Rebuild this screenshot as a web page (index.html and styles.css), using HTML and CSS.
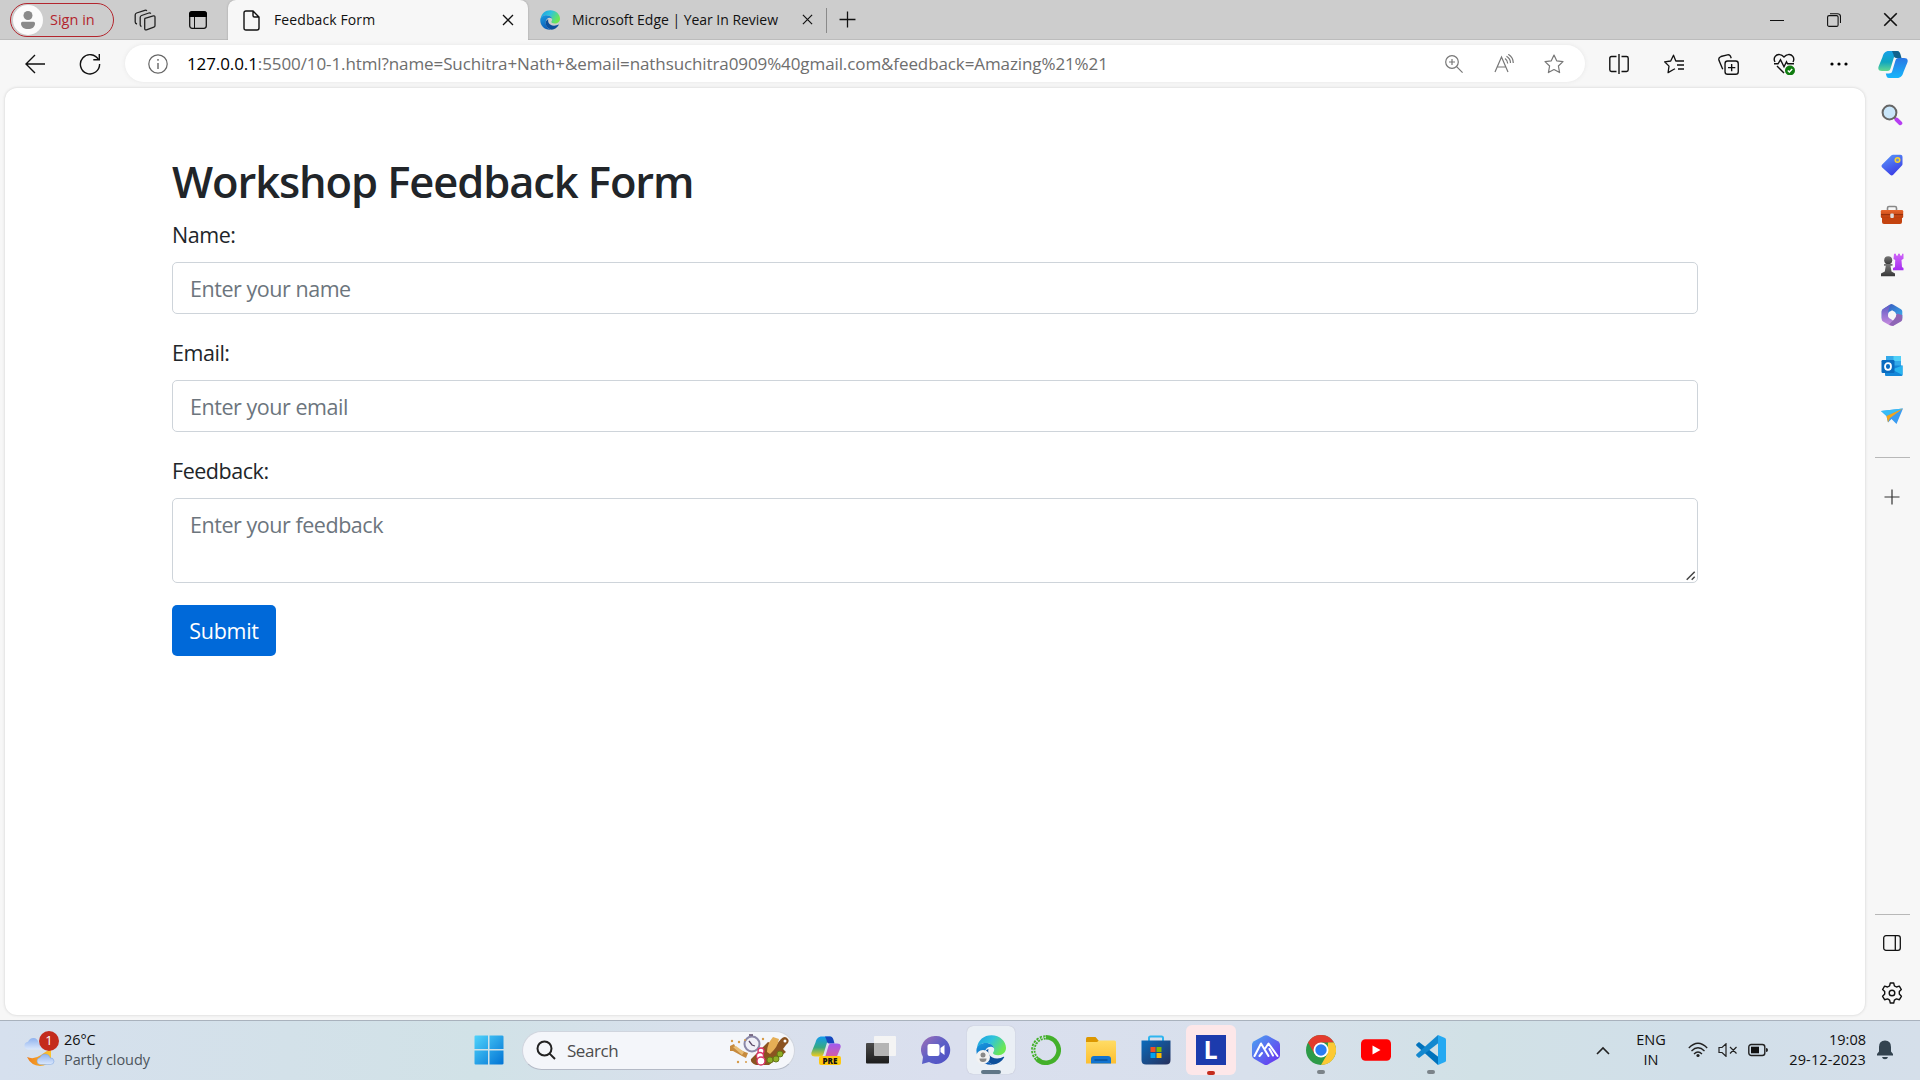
FILE: index.html
```html
<!DOCTYPE html>
<html lang="en">
<head>
<meta charset="utf-8">
<title>Feedback Form</title>
<link rel="stylesheet" href="styles.css">
</head>
<body>
<svg class="defs" width="0" height="0" aria-hidden="true">
  <defs>
    <linearGradient id="eg1" x1="0" y1="0" x2="1" y2="0.5"><stop offset="0" stop-color="#1b9de2"/><stop offset=".5" stop-color="#2fc3dc"/><stop offset="1" stop-color="#6ce852"/></linearGradient>
    <linearGradient id="eg2" x1="0" y1="0" x2="0.4" y2="1"><stop offset="0" stop-color="#1a9be0"/><stop offset="1" stop-color="#0b5cb8"/></linearGradient>
    <linearGradient id="win" x1="0" y1="0" x2="1" y2="1"><stop offset="0" stop-color="#4fd3fb"/><stop offset="1" stop-color="#0273d4"/></linearGradient>
    <linearGradient id="cp1" x1="0" y1="0" x2="0" y2="1"><stop offset="0" stop-color="#17a0e8"/><stop offset=".55" stop-color="#10a6c0"/><stop offset="1" stop-color="#64d890"/></linearGradient>
    <linearGradient id="cp2" x1="0" y1="0" x2="0" y2="1"><stop offset="0" stop-color="#2a77e4"/><stop offset="1" stop-color="#17b6fb"/></linearGradient>
    <linearGradient id="cq1" x1="0" y1="0" x2="0" y2="1"><stop offset="0" stop-color="#129bef"/><stop offset=".55" stop-color="#36a982"/><stop offset="1" stop-color="#f4cb1c"/></linearGradient>
    <linearGradient id="cq2" x1="0" y1="0" x2="0" y2="1"><stop offset="0" stop-color="#a05af0"/><stop offset="1" stop-color="#f0607c"/></linearGradient>
    <linearGradient id="tag" x1="0" y1="0" x2="0.5" y2="1"><stop offset="0" stop-color="#5b9cfb"/><stop offset="1" stop-color="#3c3fe6"/></linearGradient>
    <linearGradient id="box" x1="0" y1="0" x2="0" y2="1"><stop offset="0" stop-color="#e8662c"/><stop offset="1" stop-color="#bd3d0c"/></linearGradient>
    <linearGradient id="rook" x1="0" y1="0" x2="0" y2="1"><stop offset="0" stop-color="#cf65f8"/><stop offset="1" stop-color="#a52eef"/></linearGradient>
    <linearGradient id="pawn" x1="0" y1="0" x2="0" y2="1"><stop offset="0" stop-color="#777"/><stop offset="1" stop-color="#383838"/></linearGradient>
    <linearGradient id="fold" x1="0" y1="0" x2="0" y2="1"><stop offset="0" stop-color="#ffdc65"/><stop offset="1" stop-color="#fdbf30"/></linearGradient>
    <linearGradient id="store" x1="0" y1="0" x2="1" y2="1"><stop offset="0" stop-color="#0a6cbd"/><stop offset="1" stop-color="#27305c"/></linearGradient>
    <linearGradient id="hex" x1="0" y1="0" x2="1" y2="1"><stop offset="0" stop-color="#4aa5f0"/><stop offset="1" stop-color="#6b2cf0"/></linearGradient>
    <linearGradient id="chat" x1="0" y1="0" x2="1" y2="1"><stop offset="0" stop-color="#a36fb5"/><stop offset=".5" stop-color="#5b5fc7"/><stop offset="1" stop-color="#4e4fc4"/></linearGradient>
    <linearGradient id="moon" x1="0" y1="0" x2="1" y2="0"><stop offset="0" stop-color="#ee7d1c"/><stop offset="1" stop-color="#fbc530"/></linearGradient>
    <linearGradient id="cloud" x1="0" y1="0" x2="0" y2="1"><stop offset="0" stop-color="#8fb2ee"/><stop offset="1" stop-color="#dbe8fc"/></linearGradient>
    <linearGradient id="m1" x1="0" y1="0" x2="1" y2="1"><stop offset="0" stop-color="#3a4cb8"/><stop offset="1" stop-color="#38b3ef"/></linearGradient>
    <linearGradient id="m2" x1="0" y1="0" x2="0" y2="1"><stop offset="0" stop-color="#5a5ac4"/><stop offset="1" stop-color="#cd8ee0"/></linearGradient>
    <linearGradient id="dark" x1="0" y1="0" x2="0" y2="1"><stop offset="0" stop-color="#4b4b4b"/><stop offset="1" stop-color="#1c1c1c"/></linearGradient>
  </defs>
  <symbol id="edge" viewBox="0 0 30 30">
    <path d="M1 13C2 5 8 .3 15.500.3 24 .3 30 6.500 30 13c0 4.500-3.500 7.200-7.800 7.200-3.500 0-5.200-1-5.200-2.200 0-1 1.200-1.400 1.200-3.600C18.200 11 14.500 8 9.800 8 5.500 8 2.500 10 1 13z" fill="url(#eg1)"/>
    <path d="M.4 15.500C.4 10.500 5 8 9.800 8c4.400 0 7.600 2.300 8.300 5.200-1-.9-2.200-1.400-3.600-1.400-3.200 0-6 3-6 7.400 0 4.800 3.500 9 8.600 10.300-1 .2-1.600.2-2.400.2C6.500 29.700.4 23.500.4 15.500z" fill="url(#eg2)"/>
    <path d="M12.500 14c-1.300 4 1.500 9.500 8.600 9.500 2.700 0 5-.9 6.500-1.700.5-.2.800.2.500.7-2.300 4-6 6.600-10.500 7-5.500-1.100-9.200-5.400-9.200-10 0-2.300 1.700-4.700 4.100-5.500z" fill="#0c4f9b"/>
  </symbol>
  <symbol id="x" viewBox="0 0 12 12"><path d="M1 1l10 10M11 1L1 11" fill="none" stroke="currentColor" stroke-width="1.300"/></symbol>
  <symbol id="plus" viewBox="0 0 16 16"><path d="M8 .5v15M.5 8h15" fill="none" stroke="currentColor" stroke-width="1.200"/></symbol>
  <symbol id="copilot" viewBox="0 0 30 27">
    <path d="M19 0h-8C7 0 5.500 2.500 4.500 6L.6 15.500C-.5 19 1.500 20 4 20h5.500c2 0 2.600-1 3.200-3l3-10c.5-1.800 1.500-2.500 3.500-2.500h3C21.500 1.500 21 0 19 0z" fill="var(--a)"/>
    <path d="M14 0h5c3 0 3.500 3 4.500 7h-4c-2.500 0-3.300 0-4-3.500z" fill="var(--c)"/>
    <path d="M11 27h8c4 0 5.500-2.500 6.500-6l3.900-9.500C30.500 8 28.500 7 26 7h-5.500c-2 0-2.600 1-3.200 3l-3 10c-.5 1.800-1.500 2.500-3.500 2.500h-3C8.500 25.500 9 27 11 27z" fill="var(--b)"/>
  </symbol>
</svg>

<header class="tabstrip">
  <div class="signin">
    <svg class="avatar" width="30" height="30" viewBox="0 0 30 30"><circle cx="15" cy="15" r="15" fill="#fbfbfb"/><circle cx="15" cy="10.500" r="4.500" fill="#8a8a8a"/><path d="M8 18.200q0-1.500 1.500-1.500h11q1.500 0 1.500 1.500c0 4-3 5.800-7 5.800s-7-1.800-7-5.800z" fill="#8a8a8a"/></svg>
    <span>Sign in</span>
  </div>
  <div class="cell w60"><svg width="22" height="22" viewBox="0 0 22 22" fill="none" stroke="#222" stroke-width="1.300" stroke-linejoin="round"><path d="M11 9.300l8.300-2.400q1.700-.3 1.700 1.400v8.200q0 1.300-1.200 1.700l-7.300 2.600q-1.800.5-1.800-1.300v-8.700q0-1.200.3-1.500z"/><path d="M7.500 17.500q-1.300-.3-1.300-1.700V8.500q0-1.500 1.400-2L14.800 4q1.400-.4 2 .6"/><path d="M3 15Q1.200 14.500 1.200 13V6q0-1.500 1.400-2L10.800 1.300q1.400-.4 2 .7"/></svg></div>
  <div class="cell w46"><svg width="20" height="20" viewBox="0 0 20 20"><rect x="1.700" y="2" width="16.600" height="16.300" rx="2.500" fill="none" stroke="#111" stroke-width="1.300"/><path d="M1 7V4q0-3 3-3h12q3 0 3 3v3z" fill="#000"/><path d="M6.500 7v11" stroke="#111"/></svg></div>
  <div class="tab active">
    <svg width="17" height="21" viewBox="0 0 17 21" fill="none" stroke="#111" stroke-width="1.400"><path d="M3 1h7l6 6v11q0 2-2 2H3q-2 0-2-2V3q0-2 2-2zM10 1v4.500Q10 7 11.500 7H16"/></svg>
    <span class="t1">Feedback Form</span>
    <svg class="close" width="12" height="12"><use href="#x"/></svg>
  </div>
  <div class="tab">
    <svg width="20" height="20"><use href="#edge"/></svg>
    <span class="t2">Microsoft Edge | Year In Review</span>
    <svg class="close" width="11" height="11"><use href="#x"/></svg>
  </div>
  <div class="newtab"><svg width="17" height="17"><use href="#plus"/></svg></div>
  <div class="winctl">
    <div class="cell w57"><svg width="14" height="14"><path d="M0 7.500h14" stroke="#111"/></svg></div>
    <div class="cell w57"><svg width="14" height="14" viewBox="0 0 14 14" fill="none" stroke="#111" stroke-width="1.100"><rect x=".6" y="2.600" width="10.500" height="10.800" rx="1.500"/><path d="M3 .7h7.500q3 0 3 3V10"/></svg></div>
    <div class="cell w57"><svg width="15" height="15"><use href="#x"/></svg></div>
  </div>
</header>

<nav class="toolbar">
  <div class="cell w55"><svg width="20" height="20" viewBox="0 0 20 20" fill="none" stroke="#111" stroke-width="1.400"><path d="M20 10H1M10 1l-9 9 9 9"/></svg></div>
  <div class="cell w55"><svg width="22" height="22" viewBox="0 0 22 22" fill="none" stroke="#111" stroke-width="1.400"><path d="M19.500 6.800A9.600 9.600 0 1 0 20.600 11M20.300 1v5.800h-6"/></svg></div>
  <div class="address">
    <svg width="20" height="20" viewBox="0 0 20 20" fill="none" stroke="#666" stroke-width="1.200"><circle cx="10" cy="10" r="9.200"/><path d="M10 9v6M10 5v1.800" stroke-width="1.400"/></svg>
    <span class="url"><b>127.0.0.1</b>:5500/10-1.html?name=Suchitra+Nath+&amp;email=nathsuchitra0909%40gmail.com&amp;feedback=Amazing%21%21</span>
    <div class="addr-icons">
      <div class="cell w50"><svg width="18" height="18" viewBox="0 0 18 18" fill="none" stroke="#777" stroke-width="1.200"><circle cx="7" cy="7" r="6.300"/><path d="M11.600 11.600l6 6M7 4v6M4 7h6"/></svg></div>
      <div class="cell w50"><svg width="20" height="19" viewBox="0 0 20 19" fill="none" stroke="#777" stroke-width="1.200"><path d="M1 18L7.500 3 14 18M3.500 13h8M11 4.500q2.700 1.800 2.700 5M12.500 2.200Q16.500 4.500 16.500 9M14.300.3Q19.300 3.500 19.300 9"/></svg></div>
      <div class="cell w50"><svg width="20" height="20" viewBox="0 0 20 20" fill="none" stroke="#777" stroke-width="1.200" stroke-linejoin="round"><path d="M10 1l2.700 5.800 6.300.8-4.600 4.400 1.200 6.600L10 15.500l-5.600 3.100L5.600 12 1 7.600l6.300-.8z"/></svg></div>
    </div>
  </div>
  <div class="tools">
    <div class="cell w55"><svg width="20" height="20" viewBox="0 0 20 20" fill="none" stroke="#111" stroke-width="1.400"><path d="M7.500 2.500h-5Q.8 2.500.8 4.200v11.600q0 1.700 1.700 1.700h5M12.500 2.500h5q1.700 0 1.700 1.700v11.600q0 1.700-1.700 1.700h-5M10 0v20"/></svg></div>
    <div class="cell w55"><svg width="20" height="20" viewBox="0 0 20 20" fill="none" stroke="#111" stroke-width="1.300" stroke-linejoin="round"><path d="M13.500 7h-1.700L9.500 1.200 6.700 7l-6.100.8 4.400 4.300-.9 6.500 5.400-3.100 1.500-.8M13 7h7M13 11h7M14 15h6"/></svg></div>
    <div class="cell w55"><svg width="21" height="21" viewBox="0 0 20 20" fill="none" stroke="#111" stroke-width="1.300"><rect x="6.700" y="6.700" width="12.600" height="12.600" rx="2.500"/><path d="M13 9.500v7M9.500 13h7M4.500 14.500L.9 6Q.2 3.300 2.800 2.400L9 .8q2-.4 2.800 1.200l.8 2"/></svg></div>
    <div class="cell w55"><svg width="22" height="22" viewBox="0 0 22 22" fill="none" stroke="#111" stroke-width="1.400"><path d="M2 9Q.3 6 2.200 3.400 4 1 7 1.600q2 .3 4 2.400 2-2.100 4-2.400 3-.6 4.800 1.800Q21.700 6 20 9M1 10.800h4l2.500-4 3.500 7 2.500-5 1 2h6.500M4 13l7 7"/><circle cx="17" cy="17.500" r="5" fill="#107c10" stroke="none"/><path d="M14.800 17.600l1.600 1.500 2.800-3" stroke="#fff"/></svg></div>
    <div class="cell w55"><svg width="18" height="4"><circle cx="2" cy="2" r="1.600"/><circle cx="9" cy="2" r="1.600"/><circle cx="16" cy="2" r="1.600"/></svg></div>
    <div class="cell w54"><svg class="cp-blue" width="30" height="27"><use href="#copilot"/></svg></div>
  </div>
</nav>

<div class="body">
  <main class="page">
    <form class="container">
      <h2>Workshop Feedback Form</h2>
      <div class="group"><label for="name">Name:</label><input id="name" type="text" placeholder="Enter your name"></div>
      <div class="group"><label for="email">Email:</label><input id="email" type="text" placeholder="Enter your email"></div>
      <div class="group"><label for="fb">Feedback:</label><div class="area"><textarea id="fb" placeholder="Enter your feedback"></textarea><svg class="grip" width="10" height="10" viewBox="0 0 10 10"><path d="M.7 8.700L8.700.7M5.700 8.700l3-3" stroke="#444" stroke-width="1.500"/></svg></div></div>
      <button type="button">Submit</button>
    </form>
  </main>
  <aside class="sidebar">
    <div class="side-cell"><svg width="22" height="22" viewBox="0 0 22 22"><path d="M13 13l3 3" stroke="#666" stroke-width="2"/><path d="M15.500 15.500l3.800 3.700" stroke="#b63ef2" stroke-width="4" stroke-linecap="round"/><circle cx="8.500" cy="8.500" r="6.900" fill="#c9e6fa" stroke="#666" stroke-width="2"/></svg></div>
    <div class="side-cell"><svg width="22" height="22" viewBox="0 0 22 22"><path d="M12 .8h7.500q2 0 2 2V10q0 1-.8 1.800l-8.500 9q-1.500 1.300-3 0L1.200 13.500q-1.400-1.500 0-3l9-9Q11 .8 12 .8z" fill="url(#tag)"/><circle cx="16.500" cy="6" r="2.300" fill="#718fd0" stroke="#f8d32c" stroke-width="1.500"/></svg></div>
    <div class="side-cell"><svg width="24" height="20" viewBox="0 0 24 20"><path d="M7.500 5V3q0-1.500 1.500-1.500h6q1.500 0 1.500 1.500v2" fill="none" stroke="#888" stroke-width="1.600"/><path d="M2 9h20v8q0 2-2 2H4q-2 0-2-2z" fill="#c4430f"/><rect x=".8" y="5" width="22.400" height="8" rx="1.300" fill="url(#box)"/><path d="M1 9.700h22" stroke="#8e2c0a"/><rect x="10.300" y="8.500" width="3.500" height="4.500" rx="1" fill="#ddd"/></svg></div>
    <div class="side-cell"><svg width="24" height="24" viewBox="0 0 24 24"><path d="M14 .8h2v1.700h2V.8h2v1.700h2V.8h1.500v5L21.500 7l.5 7 1.500 1v2.200H13V15l2-1 .2-7L13.500 6z" fill="url(#rook)"/><circle cx="8.200" cy="7.300" r="4" fill="url(#pawn)"/><path d="M4 11h8.500v1.800h-2l1 5.700 3.500 2v2.700H1v-2.700l3.800-2 1-5.700H4z" fill="url(#pawn)"/></svg></div>
    <div class="side-cell"><svg width="22" height="24" viewBox="0 0 22 24"><path d="M9 1.500q1.500-1 3 0l8 4.700q1.300.8 1.300 2.200v7L14.800 11 11 7 6 14 .7 15.500V8.300q0-1.400 1.300-2.200z" fill="url(#m1)"/><path d="M.7 9v7.300q0 1.400 1.300 2.200l7 4q2 1 3.500 0L16 20l-5-3-4-4 .5-6 2-5.500L2 6.200Q.7 7 .7 9z" fill="url(#m2)"/><path d="M21.300 12v4.200q0 1.400-1.300 2.200l-8 4.500-4-1.500 5-5 3-6z" fill="#8e65b6"/><circle cx="11" cy="12" r="4" fill="#f7f7f7"/></svg></div>
    <div class="side-cell"><svg width="22" height="22" viewBox="0 0 22 22"><path d="M5 1h15v10H5z" fill="#33a9ea"/><path d="M12.500 1H20v5h-7.500z" fill="#50d0f8"/><path d="M4 10.500h17.500V20q0 1-1 1H5q-1 0-1-1z" fill="#1487d9"/><path d="M21.500 10.500V20L11 14.500z" fill="#29b5f0"/><rect x=".5" y="5" width="13" height="13" rx="1.200" fill="#0a6cc0"/><ellipse cx="7" cy="11.500" rx="3" ry="3.300" fill="none" stroke="#fff" stroke-width="1.800"/></svg></div>
    <div class="side-cell"><svg width="22" height="18" viewBox="0 0 22 18"><path d="M0 4L22 1.500 15.500 17l-5-5L7 15.500 5.500 9z" fill="#3b9cf1"/><path d="M0 4L22 1.500 5.500 9z" fill="#38bdf6"/><path d="M22 1.500L5.500 9 7 15.500 9 11z" fill="#f2a51d"/></svg></div>
    <hr>
    <div class="side-plus"><svg width="16" height="16"><use href="#plus"/></svg></div>
    <div class="side-bottom">
      <hr>
      <div class="side-cell"><svg width="18" height="16" viewBox="0 0 18 16" fill="none" stroke="#111" stroke-width="1.300"><rect x=".7" y=".7" width="16.600" height="14.600" rx="2.300"/><path d="M12.300 1v14"/></svg></div>
      <div class="side-cell"><svg width="22" height="22" viewBox="0 0 22 22" fill="none" stroke="#111" stroke-width="1.400" stroke-linejoin="round"><path d="M9.300 1h3.400l.7 2.900 2 1.100 2.900-.9 2 3.400-2 2v2.600l2.100 2.200-2 3.400-3-.8-2 1.200-.7 2.900H9.300l-.7-2.900-2-1.200-3 .8-2-3.400 2.100-2.200V9.500l-2.100-2 2-3.400 3 .9 2-1.100z"/><circle cx="11" cy="11" r="2.800"/></svg></div>
    </div>
  </aside>
</div>

<footer class="taskbar">
  <div class="weather">
    <svg width="38" height="38" viewBox="0 0 38 38"><path d="M4 18.500q-3.500-.5-3.500-4 0-3 3.500-3.700Q5.500 7 9.500 7t5 4.500l4 7z" fill="url(#cloud)"/><path d="M3 26q7 3 14-2t10-6v9q-3 8-11 8Q7 34.500 3 26z" fill="url(#moon)"/><path d="M16 33.500q-3-.5-3-3.500 0-2.700 3-3.500 1.500-3.500 5-3.500 4 0 5 3.700 4 .3 4 3.500t-3.500 3.300z" fill="url(#cloud)" stroke="#7ba4de" stroke-width=".5"/><circle cx="25" cy="10" r="10" fill="#c42b1c"/></svg>
    <span class="badge">1</span>
    <div class="wtext"><span class="temp">26°C</span><span class="cond">Partly cloudy</span></div>
  </div>
  <div class="start"><svg width="30" height="30" viewBox="0 0 30 30" fill="url(#win)"><path d="M1.500.5H14V14H.5V1.500q0-1 1-1zM15.500.5H28q1.500 0 1.500 1V14h-14zM.5 15.500H14v14H1.500q-1 0-1-1zM15.500 15.500h14v13q0 1-1.500 1H15.500z"/></svg></div>
  <div class="search">
    <svg width="20" height="20" viewBox="0 0 20 20" fill="none" stroke="#222" stroke-width="2"><circle cx="8.500" cy="8.500" r="7"/><path d="M13.600 13.600L19 19"/></svg>
    <span>Search</span>
    <svg class="art" width="62" height="33" viewBox="0 0 62 33"><path d="M23 25l17-17 8 3 5-6q4-4 7 0 2 3-2 6l-3 4 3 3-17 13H28q-6-2-5-6z" fill="#8b5320"/><circle cx="57" cy="7" r="1.500" fill="#fff"/><path d="M39 18q0-8 6-15l6 2q-1 8-9 15z" fill="#e5ae55"/><path d="M2 12l4-2 2 4 9 4 3 1-2 5-4-2-9-5-3 0z" fill="#c68a3e"/><path d="M5 13l3-1 8 6-2 3z" fill="#e8bd75"/><circle cx="24" cy="10" r="7.500" fill="#f0f0f8" stroke="#8b88a8" stroke-width="2"/><path d="M21 7l3 4 3 1M21 1h4" stroke="#5b4867" stroke-width="1.300" fill="none"/><g fill="#fff" stroke="#da3166" stroke-width="1.300"><circle cx="33" cy="17" r="3"/><circle cx="32" cy="22" r="3.500"/><circle cx="33" cy="27" r="4"/></g><g fill="#8fae25" stroke="#657817"><circle cx="42" cy="26" r="3"/><circle cx="48" cy="25" r="3"/><circle cx="52" cy="20" r="3"/></g><g fill="#d69b48"><circle cx="4" cy="7" r="1.200"/><circle cx="11" cy="8" r="1.200"/><circle cx="17" cy="6" r="1"/><circle cx="10" cy="28" r="1.200"/><circle cx="18" cy="28" r="1"/><circle cx="35" cy="5" r="1.200"/></g></svg>
  </div>
  <div class="apps">
    <div class="app"><svg class="cp-multi" width="30" height="28"><use href="#copilot"/></svg><span class="pre">PRE</span></div>
    <div class="app"><svg width="30" height="30" viewBox="0 0 30 30"><rect y="8" width="23" height="20.500" rx="1" fill="url(#dark)"/><path d="M9 1h20q1 0 1 1v18q0 1-1 1h-6V8H8V2q0-1 1-1z" fill="#f4f4f4"/><path d="M8 8h15v13H9q-1 0-1-1z" fill="#b4b4b4"/></svg></div>
    <div class="app"><svg width="30" height="30" viewBox="0 0 30 30"><path d="M15 1a14 14 0 1 1-7 26L1 29l1-7A14 14 0 0 1 15 1z" fill="url(#chat)"/><rect x="6.500" y="9" width="12" height="12" rx="2" fill="#fff"/><path d="M19.500 13l4-3v10l-4-3z" fill="#fff"/></svg></div>
    <div class="app tile"><svg width="30" height="30" viewBox="0 0 30 30"><use href="#edge" width="30" height="30"/><circle cx="7" cy="22" r="7" fill="#f2f2f2"/><circle cx="7" cy="20" r="2.500" fill="#888"/><path d="M3.500 23.500h7q0 3.500-3.500 3.500t-3.500-3.500z" fill="#888"/></svg><i class="bar"></i></div>
    <div class="app"><svg width="30" height="30" viewBox="0 0 30 30" fill="none"><path d="M15 2.300a12.700 12.700 0 1 1-9 21.700" stroke="#43b02a" stroke-width="4.600"/><path d="M6 24A12.700 12.700 0 0 1 15 2.300" stroke="#43b02a" stroke-width="4.300" stroke-dasharray="2.200 1.200"/><path d="M6 24A12.700 12.700 0 0 1 15 2.300" stroke="#d9e2ed" stroke-width="1" stroke-dasharray="2 1.500"/></svg></div>
    <div class="app"><svg width="30" height="30" viewBox="0 0 30 30"><path d="M0 3.500Q0 2 1.500 2h8l3 3.500V9H0z" fill="#dc9700"/><path d="M0 7h11l2-1.500h15.500Q30 5.500 30 7v21.500H0z" fill="url(#fold)"/><path d="M5 28.500V24q0-3 3-3h14q3 0 3 3v4.500z" fill="#1274d0"/><path d="M8.500 25h13" stroke="#064d91" stroke-width="1.300"/></svg></div>
    <div class="app"><svg width="30" height="30" viewBox="0 0 30 30"><path d="M8 6V3q0-1.500 1.500-1.500h11Q22 1.500 22 3v3" fill="none" stroke="#2fb5ef" stroke-width="2"/><path d="M.5 5.500h29V25q0 4.500-4.500 4.500H5Q.5 29.500.5 25z" fill="url(#store)"/><path d="M9.500 12h5v5h-5z" fill="#f25022"/><path d="M15.500 12h5v5h-5z" fill="#7fba00"/><path d="M9.500 18h5v5h-5z" fill="#00a4ef"/><path d="M15.500 18h5v5h-5z" fill="#ffb900"/></svg></div>
    <div class="app tile pink"><span class="ell">L</span><i class="bar red"></i></div>
    <div class="app"><svg width="30" height="30" viewBox="0 0 30 30"><path d="M13 .8q2-1 4 0l10 5.500q2 1.200 2 3.200v11q0 2-2 3.200l-10 5.700q-2 1-4 0L3 23.700q-2-1.200-2-3.200v-11q0-2 2-3.200z" fill="url(#hex)"/><path d="M3.500 21L10 8.500 17.500 21M8.500 21l2.500-3M14.500 13l3-4.500L26.500 21M22 20.500L18.500 14" fill="none" stroke="#fff" stroke-width="2" stroke-linecap="round" stroke-linejoin="round"/></svg></div>
    <div class="app"><svg width="30" height="30" viewBox="0 0 30 30"><circle cx="15" cy="15" r="15" fill="#2d9b48"/><path d="M2 7.500A15 15 0 0 1 28 7.500H15L8.500 18.700z" fill="#e33b2e"/><path d="M28 7.500A15 15 0 0 1 15 30l6.500-11.300L22 7.500z" fill="#fcc934"/><circle cx="15" cy="15" r="7.500" fill="#fff"/><circle cx="15" cy="15" r="5.700" fill="#2b7cf3"/></svg><i class="bar dot"></i></div>
    <div class="app"><svg width="30" height="30" viewBox="0 0 30 30"><rect y="4.300" width="30" height="21.400" rx="4.500" fill="#f00"/><path d="M11.500 10.500l8 4.500-8 4.500z" fill="#fff"/></svg></div>
    <div class="app"><svg width="30" height="30" viewBox="0 0 30 30"><path d="M22.500 22L3 7 .5 9q-.8 1 .2 2L22 30z" fill="#0072bc"/><path d="M22.500 8L3 23 .5 21q-.8-1 .2-2L22 0z" fill="#1388cf"/><path d="M22 0l7 3q1 .6 1 1.500v21q0 1-1 1.500l-7 3z" fill="#25a9f2"/></svg><i class="bar dot"></i></div>
  </div>
  <div class="tray">
    <div class="cell w44"><svg width="14" height="9" viewBox="0 0 14 9" fill="none" stroke="#222" stroke-width="1.600"><path d="M1 8l6-6 6 6"/></svg></div>
    <div class="lang"><span>ENG</span><span>IN</span></div>
    <div class="cell w30"><svg width="20" height="16" viewBox="0 0 20 16" fill="none" stroke="#222" stroke-width="1.300"><path d="M.8 6q9.200-9.500 18.400 0M3.500 9q6.500-6.500 13 0M6 12q4-4 8 0"/><circle cx="10" cy="13.500" r="1.600" fill="#222" stroke="none"/></svg></div>
    <div class="cell w30"><svg width="20" height="14" viewBox="0 0 20 14" fill="none" stroke="#222" stroke-width="1.200"><path d="M1 4.500h3l4-3.700v12.500L4 9.500H1zM12 4l6.500 6.500M18.500 4L12 10.500"/></svg></div>
    <div class="cell w30"><svg width="20" height="14" viewBox="0 0 20 14"><rect x=".8" y="1.500" width="16" height="11" rx="2.500" fill="none" stroke="#222" stroke-width="1.400"/><rect x="3" y="3.700" width="8" height="6.600" fill="#111"/><path d="M18 5q2 0 2 2t-2 2z" fill="#222"/></svg></div>
    <div class="clock"><span class="time">19:08</span><span class="date">29-12-2023</span></div>
    <svg width="16" height="20" viewBox="0 0 16 20" fill="#33434f"><path d="M8 .5q6 0 6 6.500v4.500l2 2.500v1.500H0V14l2-2.500V7Q2 .5 8 .5zM5 17h6q-.5 2.200-3 2.200T5 17z"/></svg>
  </div>
</footer>
</body>
</html>
```
FILE: styles.css
```css
* { box-sizing: border-box; }
body { margin: 0; width: 1920px; height: 1080px; overflow: hidden; display: flex; flex-direction: column; background: #f7f7f7; color: #111; font-family: "Open Sans", "Noto Sans", sans-serif; }
.defs { position: absolute; }
svg { flex: none; display: block; }
span { white-space: nowrap; }
.cell { display: flex; align-items: center; justify-content: center; flex: none; }
.w30 { width: 30px; } .w44 { width: 44px; } .w46 { width: 46px; } .w50 { width: 50px; }
.w54 { width: 54px; } .w55 { width: 55px; } .w57 { width: 57px; } .w60 { width: 60px; }

.tabstrip { height: 40px; flex: none; display: flex; background: #cdcdcd; font-size: 14px; border-bottom: 1px solid #bcbcbc; }
.tabstrip span { padding-bottom: 1px; }
.signin { width: 104px; height: 34px; margin: 3px 1px 0 10px; border: 1.500px solid #b3262e; border-radius: 18px; display: flex; align-items: center; gap: 7px; padding-left: 2px; color: #b3262e; flex: none; font-size: 14.500px; }
.tab { width: 298px; display: flex; align-items: center; padding: 0 13px 0 12px; }
.tab.active { background: #f7f7f7; width: 300px; margin-left: 7px; height: 40px; border-radius: 8px 8px 0 0; padding: 0 14px 0 15px; flex: none; box-shadow: 0 0 2px #999; clip-path: inset(0 -3px 0 -3px); }
.tab .t1 { margin-left: 14px; letter-spacing: .1px; }
.tab .t2 { margin-left: 12px; letter-spacing: -.03px; }
.close { margin-left: auto; }
.newtab { width: 44px; height: 25px; margin-top: 8px; padding: 0 0 2px 12px; border-left: 1px solid #8a8a8a; display: flex; align-items: center; }
.winctl { margin-left: auto; display: flex; padding-right: 1px; }

.toolbar { height: 48px; flex: none; display: flex; align-items: center; padding-left: 7px; }
.address { width: 1461px; height: 37px; margin: 0 0 1px 8px; background: #fff; border-radius: 19px; display: flex; align-items: center; padding: 0 6px 0 23px; box-shadow: 0 0 4px #e6e6e6; }
.url { margin-left: 19px; font-size: 17px; letter-spacing: -.1px; color: #6e6e6e; }
.url b { font-weight: 400; color: #000; }
.addr-icons { display: flex; margin-left: auto; }
.tools { display: flex; margin-left: 6px; }
.cp-blue { --a: url(#cp1); --b: url(#cp2); --c: #12628d; }
.cp-multi { --a: url(#cq1); --b: url(#cq2); --c: #1646bd; }

.body { flex: 1; display: flex; min-height: 0; }
.page { width: 1860px; flex: none; margin: 0 0 5px 5px; background: #fff; border-radius: 12px; box-shadow: 0 0 3px #ccc; padding: 66px 167px; }
.container { font-size: 21.500px; line-height: 33px; letter-spacing: -.46px; color: #212529; }
h2 { font-size: 43.500px; line-height: 55px; font-weight: 600; margin: 0 0 9px; letter-spacing: -1.100px; }
.group { margin-bottom: 22px; }
label { display: block; margin-bottom: 11px; }
input, textarea { display: block; width: 1526px; height: 52px; border: 1px solid #ced4da; border-radius: 5px; padding: 9px 16px 8px 17px; font: inherit; letter-spacing: inherit; background: #fff; }
.area { position: relative; }
textarea { height: 85px; resize: none; }
.grip { position: absolute; right: 2px; bottom: 2px; }
::placeholder { color: #6c757d; opacity: 1; }
button { height: 51px; width: 104px; padding: 0; border: 0; border-radius: 5px; background: #0069d9; color: #fff; font: inherit; letter-spacing: -.3px; display: block; }

.sidebar { width: 55px; padding: 2px 1px 0 0; display: flex; flex-direction: column; align-items: center; }
.side-cell { height: 50.100px; display: flex; align-items: center; justify-content: center; flex: none; }
.sidebar hr { width: 35px; height: 1px; border: 0; background: #b8b8b8; margin: 16px 0 0; flex: none; }
.side-plus { margin-top: 31px; color: #333; }
.side-bottom { margin-top: auto; padding-bottom: 2px; }
.side-bottom hr { margin: 0 0 3px; }

.taskbar { height: 60px; flex: none; display: flex; align-items: center; border-top: 1px solid #a9b2bd; padding-bottom: 1px; background: linear-gradient(90deg, #d6e0ee 0, #d3e1e9 15%, #d1e2e7 25%, #d8e0ec 36%, #dadfee 50%, #d8e0ec 65%, #d1e1e6 77%, #d1dfe9 88%, #d5dfea 100%); }
.weather { position: relative; width: 450px; margin-left: 24px; display: flex; align-items: center; flex: none; }
.badge { position: absolute; left: 15px; top: -1px; width: 20px; text-align: center; color: #fff; font-size: 13px; line-height: 22px; }
.wtext { margin-left: 2px; display: flex; flex-direction: column; font-size: 14.500px; line-height: 20px; letter-spacing: -.08px; padding-bottom: 1px; }
.cond { color: #4d555c; }
.search { width: 273px; height: 39px; margin-left: 18px; border-radius: 20px; background: #f4f6fa; border: 1px solid #d0d5de; border-bottom-color: #b4bac6; display: flex; align-items: center; padding: 0 4px 0 13px; font-size: 17px; color: #4c4c4c; flex: none; }
.search span { margin-left: 11px; letter-spacing: -.45px; }
.art { margin-left: auto; }
.apps { display: flex; margin-left: 3px; }
.app { width: 55px; height: 50px; display: flex; align-items: center; justify-content: center; position: relative; flex: none; }
.tile { width: 48px; height: 48px; margin: 1px 3.500px; background: #eaeff5; border-radius: 6px; box-shadow: 0 0 1px #aab; }
.tile.pink { width: 50px; height: 50px; margin: 0 2.500px; background: #fde7e9; box-shadow: none; }
.bar { position: absolute; bottom: 0; width: 20px; height: 4px; border-radius: 2px; background: #607687; }
.bar.red { width: 8px; background: #c42b1c; }
.bar.dot { width: 8px; background: #7b8389; bottom: 1px; }
.pre { position: absolute; left: 21px; top: 31px; width: 22px; height: 9px; border-radius: 2px; background: #ffc90e; color: #111; font-size: 8px; line-height: 9px; font-weight: 800; text-align: center; }
.ell { width: 30px; height: 30px; background: #1c3bad; color: #fff; font: 700 25px/28px "Open Sans", sans-serif; text-align: center; }
.tray { margin-left: auto; display: flex; align-items: center; font-size: 14.500px; line-height: 20px; padding-right: 27px; }
.lang { width: 52px; display: flex; flex-direction: column; align-items: center; margin-right: 6px; padding-bottom: 1px; }
.clock { width: 92px; margin-right: 11px; margin-left: 1px; padding-bottom: 1px; display: flex; flex-direction: column; align-items: flex-end; }
.date { letter-spacing: .1px; }
```
